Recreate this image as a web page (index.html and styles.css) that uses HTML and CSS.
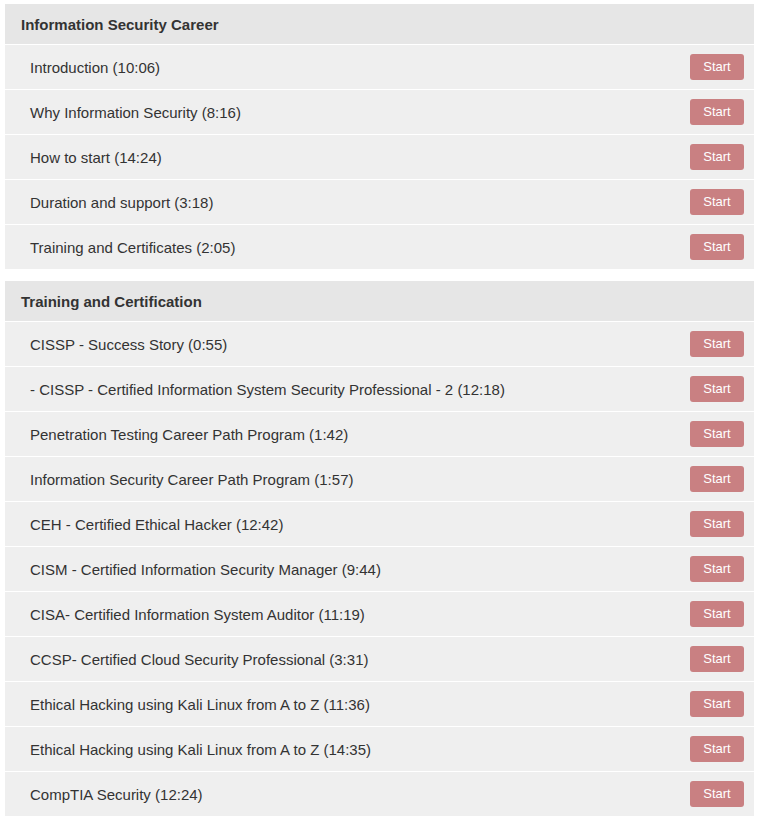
FILE: index.html
```html
<!DOCTYPE html>
<html lang="en">

<head>
  <meta charset="UTF-8">
  <meta name="viewport" content="width=device-width, initial-scale=1.0">
  <title>Courses</title>

  <link rel="stylesheet" href="styles.css">
</head>

<body>
  <div class="section">
    <div class="section-title">Information Security Career</div>
    <div class="lesson"><span>Introduction (10:06)</span><a class="start">Start</a></div>
    <div class="lesson"><span>Why Information Security (8:16)</span><a class="start">Start</a></div>
    <div class="lesson"><span>How to start (14:24)</span><a class="start">Start</a></div>
    <div class="lesson"><span>Duration and support (3:18)</span><a class="start">Start</a></div>
    <div class="lesson"><span>Training and Certificates (2:05)</span><a class="start">Start</a></div>
  </div>

  <div class="section">
    <div class="section-title">Training and Certification</div>
    <div class="lesson"><span>CISSP - Success Story (0:55)</span><a class="start">Start</a></div>
    <div class="lesson"><span>- CISSP - Certified Information System Security Professional - 2 (12:18)</span><a class="start">Start</a></div>
    <div class="lesson"><span>Penetration Testing Career Path Program (1:42)</span><a class="start">Start</a></div>
    <div class="lesson"><span>Information Security Career Path Program (1:57)</span><a class="start">Start</a></div>
    <div class="lesson"><span>CEH - Certified Ethical Hacker (12:42)</span><a class="start">Start</a></div>
    <div class="lesson"><span>CISM - Certified Information Security Manager (9:44)</span><a class="start">Start</a></div>
    <div class="lesson"><span>CISA- Certified Information System Auditor (11:19)</span><a class="start">Start</a></div>
    <div class="lesson"><span>CCSP- Certified Cloud Security Professional (3:31)</span><a class="start">Start</a></div>
    <div class="lesson"><span>Ethical Hacking using Kali Linux from A to Z (11:36)</span><a class="start">Start</a></div>
    <div class="lesson"><span>Ethical Hacking using Kali Linux from A to Z (14:35)</span><a class="start">Start</a></div>
    <div class="lesson"><span>CompTIA Security (12:24)</span><a class="start">Start</a></div>
  </div>
</body>

</html>
```

FILE: styles.css
```css
body {
  font-family: 'Liberation Sans', Arial, sans-serif;
  background-color: #ffffff;
  color: #333333;
  margin: 4px 5px 0 5px;
}

.section {
  display: flex;
  flex-direction: column;
  gap: 1px;
  margin-bottom: 12px;
}

.section-title {
  background-color: #e6e6e6;
  height: 40px;
  padding-left: 16px;
  display: flex;
  align-items: center;
  font-size: 15px;
  font-weight: bold;
}

.lesson {
  background-color: #efefef;
  height: 44px;
  padding: 0 10px 0 25px;
  display: flex;
  align-items: center;
  justify-content: space-between;
  font-size: 15px;
}

.start {
  background-color: #c98082;
  color: #ffffff;
  font-size: 13px;
  width: 54px;
  height: 26px;
  padding-bottom: 2px;
  box-sizing: border-box;
  border-radius: 3px;
  display: flex;
  align-items: center;
  justify-content: center;
  cursor: pointer;
}
```
